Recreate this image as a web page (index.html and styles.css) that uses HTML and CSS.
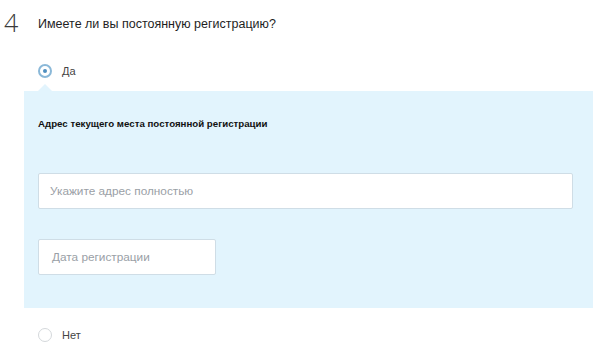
FILE: index.html
```html
<!DOCTYPE html>
<html lang="ru">
<head>
<meta charset="utf-8">
<link rel="stylesheet" href="styles.css">
</head>
<body>
<div class="question">
  <div class="q-head">
    <span class="q-num">4</span>
    <span class="q-text">Имеете ли вы постоянную регистрацию?</span>
  </div>
  <label class="option option-yes">
    <span class="radio radio-on"></span>
    <span class="opt-text">Да</span>
  </label>
  <div class="panel">
    <div class="panel-label">Адрес текущего места постоянной регистрации</div>
    <div class="field field-wide">Укажите адрес полностью</div>
    <div class="field field-short">Дата регистрации</div>
  </div>
  <label class="option option-no">
    <span class="radio"></span>
    <span class="opt-text">Нет</span>
  </label>
</div>
</body>
</html>
```

FILE: styles.css
```css
html, body {
  margin: 0;
  padding: 0;
  background: #fff;
}
body {
  width: 600px;
  height: 352px;
  overflow: hidden;
  font-family: "Liberation Sans", Arial, sans-serif;
  color: #222;
}
.question {
  display: flex;
  flex-direction: column;
}
.q-head {
  display: flex;
  align-items: flex-end;
  height: 33px;
  padding-left: 4px;
}
.q-num {
  font-family: "Open Sans", sans-serif;
  font-weight: 300;
  font-size: 25px;
  line-height: 24px;
  width: 34px;
  color: #3a3a3a;
  position: relative;
  top: 1px;
}
.q-text {
  font-size: 12.5px;
  line-height: 14px;
  color: #1e1e1e;
  margin-bottom: 2px;
}
.option {
  display: flex;
  align-items: center;
  gap: 10px;
  padding-left: 38px;
  height: 14px;
}
.option-yes {
  margin-top: 31px;
}
.option-no {
  margin-top: 20px;
}
.radio {
  width: 12px;
  height: 12px;
  border: 1px solid #d4d8db;
  border-radius: 50%;
  background: #fff;
  display: flex;
  align-items: center;
  justify-content: center;
  flex: none;
}
.radio-on {
  border: 2px solid #8ab8d8;
  width: 10px;
  height: 10px;
}
.radio-on::after {
  content: "";
  width: 4px;
  height: 4px;
  border-radius: 50%;
  background: #4f8fc0;
}
.opt-text {
  font-size: 11px;
  color: #444;
}
.panel {
  position: relative;
  margin: 13px 0 0 24px;
  width: 569px;
  height: 217px;
  box-sizing: border-box;
  background: #e2f4fd;
  padding: 28px 20px 0 14px;
  display: flex;
  flex-direction: column;
  align-items: flex-start;
}
.panel::before {
  content: "";
  position: absolute;
  left: 14px;
  top: -7px;
  border-left: 7px solid transparent;
  border-right: 7px solid transparent;
  border-bottom: 7px solid #e2f4fd;
}
.panel-label {
  font-size: 9.7px;
  font-weight: bold;
  color: #111;
  line-height: 11px;
  position: relative;
  top: -1px;
}
.field {
  box-sizing: border-box;
  background: #fff;
  border: 1px solid #cfdde6;
  border-radius: 2px;
  height: 36px;
  padding: 0 11px;
  display: flex;
  align-items: center;
  font-size: 11.8px;
  color: #9aa0a6;
}
.field-wide {
  margin-top: 43px;
  width: 535px;
}
.field-short {
  margin-top: 30px;
  width: 178px;
  padding-left: 13px;
}
```
